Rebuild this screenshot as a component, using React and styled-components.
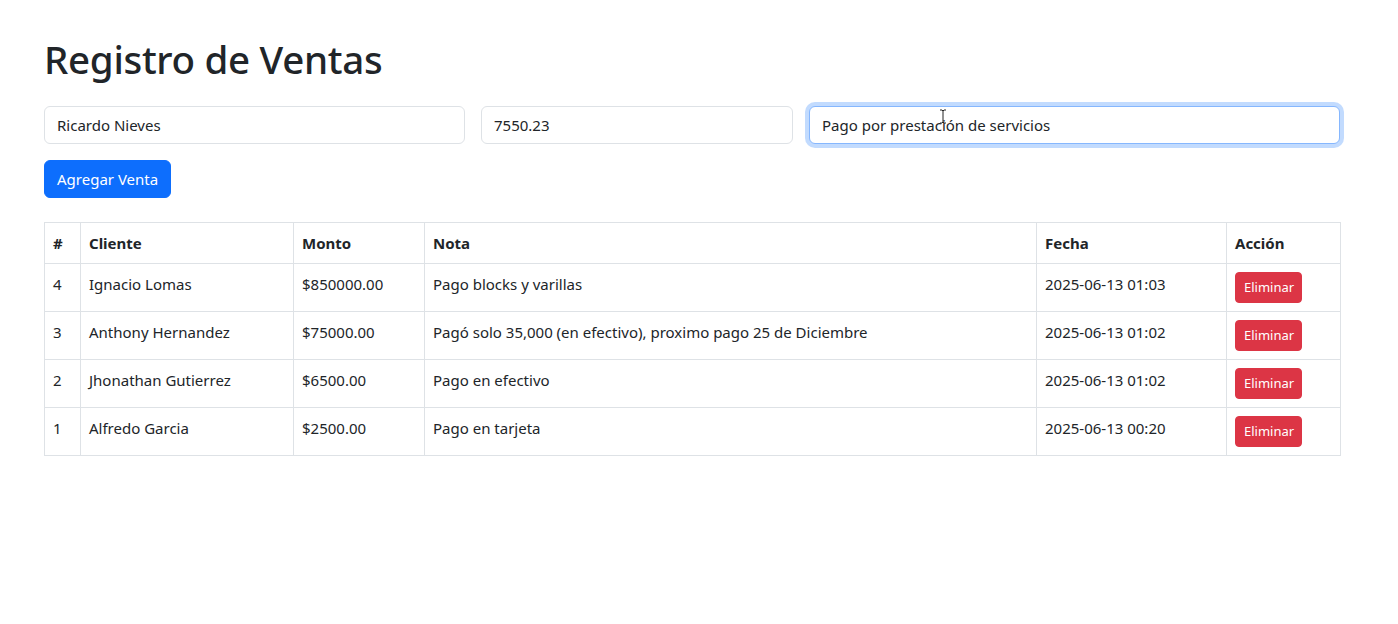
import React from "react";
import styled, { createGlobalStyle } from "styled-components";

const Global = createGlobalStyle`
  html, body { margin: 0; padding: 0; background: #fff; }
  body {
    font-family: "Noto Sans", "Liberation Sans", sans-serif;
    color: #212529;
    font-size: 16px;
    line-height: 1.5;
  }
  * { box-sizing: border-box; }
`;

const Container = styled.div`
  width: 1296px;
  margin-left: 44px;
  padding-top: 36px;
`;

const Title = styled.h1`
  font-size: 38.5px;
  font-weight: 500;
  line-height: 1.2;
  margin: 0 0 24px;
  letter-spacing: -0.3px;
`;

const FormRow = styled.div`
  display: grid;
  grid-template-columns: 421px 312px 1fr;
  column-gap: 16px;
  margin-bottom: 16px;
`;

const Field = styled.div`
  position: relative;
`;

const Input = styled.input`
  display: block;
  width: 100%;
  height: 38px;
  padding: 6px 12px;
  font: inherit;
  font-size: 15px;
  color: #212529;
  background: #fff;
  border: 1px solid ${(p) => (p.$focused ? "#86b7fe" : "#dee2e6")};
  border-radius: 6px;
  outline: none;
  box-shadow: ${(p) => (p.$focused ? "0 0 0 4px rgba(13,110,253,0.25)" : "none")};
`;

const Cursor = styled.svg`
  position: absolute;
  left: 130px;
  top: 3px;
  pointer-events: none;
`;

const Button = styled.button`
  font: inherit;
  font-size: ${(p) => (p.$small ? "13px" : "15px")};
  line-height: 1.5;
  color: #fff;
  background: ${(p) => (p.$variant === "danger" ? "#dc3545" : "#0d6efd")};
  border: 1px solid ${(p) => (p.$variant === "danger" ? "#dc3545" : "#0d6efd")};
  border-radius: ${(p) => (p.$small ? "4px" : "6px")};
  padding: ${(p) => (p.$small ? "4px 8px" : "6px 12px")};
  height: ${(p) => (p.$small ? "31px" : "38px")};
  width: ${(p) => (p.$small ? "67px" : "127px")};
  cursor: pointer;
  white-space: nowrap;
`;

const Table = styled.table`
  width: 100%;
  margin-top: 24px;
  border-collapse: collapse;
  table-layout: fixed;
  font-size: 15px;
`;

const Th = styled.th`
  text-align: left;
  font-weight: 700;
  padding: 8px;
  border: 1px solid #dee2e6;
  vertical-align: middle;
  height: 41px;
`;

const Td = styled.td`
  padding: 9px 8px 7px;
  border: 1px solid #dee2e6;
  vertical-align: top;
  height: 48px;
`;

const ActionTd = styled(Td)`
  padding: 8px;
`;

const cols = [36, 213, 131, 612, 190, 114];

const rows = [
  { id: 4, cliente: "Ignacio Lomas", monto: "$850000.00", nota: "Pago blocks y varillas", fecha: "2025-06-13 01:03" },
  { id: 3, cliente: "Anthony Hernandez", monto: "$75000.00", nota: "Pagó solo 35,000 (en efectivo), proximo pago 25 de Diciembre", fecha: "2025-06-13 01:02" },
  { id: 2, cliente: "Jhonathan Gutierrez", monto: "$6500.00", nota: "Pago en efectivo", fecha: "2025-06-13 01:02" },
  { id: 1, cliente: "Alfredo Garcia", monto: "$2500.00", nota: "Pago en tarjeta", fecha: "2025-06-13 00:20" },
];

export default function App() {
  return (
    <>
      <Global />
      <Container>
        <Title>Registro de Ventas</Title>
        <FormRow>
          <Input defaultValue="Ricardo Nieves" />
          <Input defaultValue="7550.23" />
          <Field>
            <Input $focused defaultValue="Pago por prestación de servicios" />
            <Cursor width="8" height="15" viewBox="0 0 8 15">
              <path d="M1 1h2l1 1 1-1h2M4 2v11M1 14h2l1-1 1 1h2" fill="none" stroke="#222" strokeWidth="1" />
            </Cursor>
          </Field>
        </FormRow>
        <Button>Agregar Venta</Button>
        <Table>
          <colgroup>
            {cols.map((w, i) => (
              <col key={i} style={{ width: w }} />
            ))}
          </colgroup>
          <thead>
            <tr>
              <Th>#</Th>
              <Th>Cliente</Th>
              <Th>Monto</Th>
              <Th>Nota</Th>
              <Th>Fecha</Th>
              <Th>Acción</Th>
            </tr>
          </thead>
          <tbody>
            {rows.map((r) => (
              <tr key={r.id}>
                <Td>{r.id}</Td>
                <Td>{r.cliente}</Td>
                <Td>{r.monto}</Td>
                <Td>{r.nota}</Td>
                <Td>{r.fecha}</Td>
                <ActionTd>
                  <Button $variant="danger" $small>Eliminar</Button>
                </ActionTd>
              </tr>
            ))}
          </tbody>
        </Table>
      </Container>
    </>
  );
}
